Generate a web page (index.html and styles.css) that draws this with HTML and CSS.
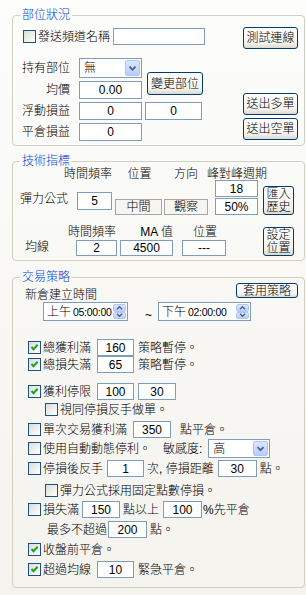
FILE: index.html
```html
<!DOCTYPE html>
<html lang="zh-TW">
<head>
<meta charset="utf-8">
<title>策略設定</title>
<link rel="stylesheet" href="styles.css">
</head>
<body>
<div class="panel">

  <fieldset class="grp grp1">
    <legend>部位狀況</legend>
    <div class="g1">
      <div class="g1-left">
        <div class="row-a">
          <span class="cb cb-a"></span><span class="txt name-lbl">發送頻道名稱</span><span class="tb tb-name"></span>
        </div>
        <div class="g1-grid">
          <span class="glbl">持有部位</span>
          <div class="combo combo-pos"><span class="combo-val">無</span><span class="combo-btn"><svg viewBox="0 0 15 16" width="15" height="16"><path d="M4 6.5 L7.5 10 L11 6.5" fill="none" stroke="#4d6185" stroke-width="2"/></svg></span></div>
          <button class="btn btn-change">變更部位</button>
          <span class="glbl">均價</span>
          <span class="tb tb-g1">0.00</span>
          <span class="glbl">浮動損益</span>
          <span class="tb tb-g1">0</span>
          <span class="tb tb-g1b">0</span>
          <span class="glbl">平倉損益</span>
          <span class="tb tb-g1">0</span>
        </div>
      </div>
      <div class="g1-right">
        <button class="btn btn-r">測試連線</button>
        <div class="btn-pair">
          <button class="btn btn-r">送出多單</button>
          <button class="btn btn-r">送出空單</button>
        </div>
      </div>
    </div>
  </fieldset>

  <fieldset class="grp grp2">
    <legend>技術指標</legend>
    <div class="g2">
      <div class="g2a">
        <span class="hd hd-a1">時間頻率</span>
        <span class="hd hd-a2">位置</span>
        <span class="hd hd-a3">方向</span>
        <span class="hd hd-a4">峰對峰週期</span>
        <span class="lbl-elastic">彈力公式</span>
        <span class="tb tb-five">5</span>
        <span class="tb tb-peak tb-peak1">18</span>
        <button class="btn btn-two btn-import">匯入<br>歷史</button>
        <span class="ro ro-mid">中間</span>
        <span class="ro ro-watch">觀察</span>
        <span class="tb tb-peak tb-peak2">50%</span>
      </div>
      <div class="g2b">
        <span class="hd hd-b1">時間頻率</span>
        <span class="hd hd-b2">MA 值</span>
        <span class="hd hd-b3">位置</span>
        <span class="lbl-ma">均線</span>
        <span class="tb tb-b1">2</span>
        <span class="tb tb-b2">4500</span>
        <span class="tb tb-b3">---</span>
        <button class="btn btn-two btn-setpos">設定<br>位置</button>
      </div>
    </div>
  </fieldset>

  <fieldset class="grp grp3">
    <legend>交易策略</legend>
    <div class="g3">
      <div class="g3-top">
        <span class="txt new-time">新倉建立時間</span>
        <button class="btn btn-apply">套用策略</button>
      </div>
      <div class="time-row">
        <div class="dtp dtp1"><span class="dtp-val"><span class="dtp-ap">上午</span><span class="dtp-num">05:00:00</span></span>
          <span class="spin"><span class="spin-b"><svg viewBox="0 0 13 8" width="13" height="8"><path d="M3.5 5.5 L6.5 2.5 L9.5 5.5" fill="none" stroke="#4d6185" stroke-width="1.6"/></svg></span><span class="spin-b"><svg viewBox="0 0 13 8" width="13" height="8"><path d="M3.5 2.5 L6.5 5.5 L9.5 2.5" fill="none" stroke="#4d6185" stroke-width="1.6"/></svg></span></span>
        </div>
        <span class="tilde">~</span>
        <div class="dtp dtp2"><span class="dtp-val"><span class="dtp-ap">下午</span><span class="dtp-num">02:00:00</span></span>
          <span class="spin"><span class="spin-b"><svg viewBox="0 0 13 8" width="13" height="8"><path d="M3.5 5.5 L6.5 2.5 L9.5 5.5" fill="none" stroke="#4d6185" stroke-width="1.6"/></svg></span><span class="spin-b"><svg viewBox="0 0 13 8" width="13" height="8"><path d="M3.5 2.5 L6.5 5.5 L9.5 2.5" fill="none" stroke="#4d6185" stroke-width="1.6"/></svg></span></span>
        </div>
      </div>

      <div class="rows">
        <div class="r r-first">
          <span class="cb on"><svg viewBox="0 0 11 11" width="11" height="11"><path d="M2.5 5 L4.5 7.2 L8.6 2.8" fill="none" stroke="#21a121" stroke-width="2"/></svg></span><span class="txt">總獲利滿</span><span class="tb w37 ml6">160</span><span class="txt ml4">策略暫停。</span>
        </div>
        <div class="r t0">
          <span class="cb on"><svg viewBox="0 0 11 11" width="11" height="11"><path d="M2.5 5 L4.5 7.2 L8.6 2.8" fill="none" stroke="#21a121" stroke-width="2"/></svg></span><span class="txt">總損失滿</span><span class="tb w37 ml6">65</span><span class="txt ml4">策略暫停。</span>
        </div>
        <div class="r t10">
          <span class="cb on"><svg viewBox="0 0 11 11" width="11" height="11"><path d="M2.5 5 L4.5 7.2 L8.6 2.8" fill="none" stroke="#21a121" stroke-width="2"/></svg></span><span class="txt">獲利停限</span><span class="tb w37 ml6">100</span><span class="tb w38 ml4">30</span>
        </div>
        <div class="r t1 indent">
          <span class="cb"></span><span class="txt">視同停損反手做單。</span>
        </div>
        <div class="r">
          <span class="cb"></span><span class="txt">單次交易獲利滿</span><span class="tb w38 ml6">350</span><span class="txt ml9">點平倉。</span>
        </div>
        <div class="r t2">
          <span class="cb"></span><span class="txt">使用自動動態停利。</span><span class="txt ml12">敏感度:</span>
          <div class="combo combo-sens"><span class="combo-val">高</span><span class="combo-btn"><svg viewBox="0 0 15 15" width="15" height="15"><path d="M4 6 L7.5 9.5 L11 6" fill="none" stroke="#4d6185" stroke-width="2"/></svg></span></div>
        </div>
        <div class="r">
          <span class="cb"></span><span class="txt">停損後反手</span><span class="tb w37 ml4">1</span><span class="txt ml3">次, 停損距離</span><span class="tb w39 ml4">30</span><span class="txt ml3">點。</span>
        </div>
        <div class="r t5 indent">
          <span class="cb"></span><span class="txt">彈力公式採用固定點數停損。</span>
        </div>
        <div class="r t2">
          <span class="cb"></span><span class="txt">損失滿</span><span class="tb w38 ml3">150</span><span class="txt ml3">點以上</span><span class="tb w39 ml4">100</span><span class="txt ml1">%先平倉</span>
        </div>
        <div class="r sub">
          <span class="txt">最多不超過</span><span class="tb w39 ml1">200</span><span class="txt ml3">點。</span>
        </div>
        <div class="r">
          <span class="cb on"><svg viewBox="0 0 11 11" width="11" height="11"><path d="M2.5 5 L4.5 7.2 L8.6 2.8" fill="none" stroke="#21a121" stroke-width="2"/></svg></span><span class="txt">收盤前平倉。</span>
        </div>
        <div class="r">
          <span class="cb on"><svg viewBox="0 0 11 11" width="11" height="11"><path d="M2.5 5 L4.5 7.2 L8.6 2.8" fill="none" stroke="#21a121" stroke-width="2"/></svg></span><span class="txt">超過均線</span><span class="tb w37 ml6">10</span><span class="txt ml4">緊急平倉。</span>
        </div>
      </div>
    </div>
  </fieldset>

</div>
</body>
</html>
```

FILE: styles.css
```css
* { box-sizing: border-box; }
html, body { margin: 0; padding: 0; }
body {
  width: 306px;
  height: 595px;
  overflow: hidden;
  background: linear-gradient(#fdfdfc, #f4f3ee);
  font: 300 12px/14px "Liberation Sans", "Noto Sans CJK TC", sans-serif;
  color: #000;
}
.panel {
  display: flex;
  flex-direction: column;
  padding: 8px 1px 0 12px;
}

/* group boxes */
.grp {
  margin: 0;
  padding: 0;
  min-width: 0;
  border: 1px solid #d0d0bf;
  border-radius: 4px;
}
.grp legend {
  color: #0046d5;
  padding: 0 2px;
  margin-left: 7px;
  line-height: 14px;
}
.grp2 { margin-top: 8px; }
.grp3 { margin-top: 9px; }

.txt { white-space: nowrap; flex: none; }

/* text boxes */
.tb {
  display: flex;
  align-items: center;
  justify-content: center;
  flex: none;
  height: 17px;
  border: 1px solid #7f9db9;
  background: #fff;
  white-space: nowrap;
}
.ro {
  display: flex;
  align-items: center;
  justify-content: center;
  height: 16px;
  border: 1px solid #a7a6a0;
  background: #f5f5f1;
}

/* buttons */
.btn {
  font: inherit;
  color: #000;
  padding: 0;
  margin: 0;
  border: 1px solid #003c74;
  border-radius: 3px;
  background: linear-gradient(#ffffff, #f3f3ef 75%, #dcd8cd);
  line-height: 14px;
  white-space: nowrap;
}
.btn-two { line-height: 13px; }

/* checkbox */
.cb {
  display: flex;
  align-items: center;
  justify-content: center;
  flex: none;
  width: 13px;
  height: 13px;
  border: 1px solid #1c5180;
  background: linear-gradient(135deg, #dcdcd7, #ffffff);
  margin-right: 2px;
}

/* combo box */
.combo {
  display: flex;
  align-items: center;
  border: 1px solid #7f9db9;
  background: #fff;
  padding: 1px;
}
.combo-val { flex: 1; padding-left: 3px; }
.combo-btn {
  display: flex;
  align-items: center;
  justify-content: center;
  width: 15px;
  align-self: stretch;
  border: 1px solid #b1c6f5;
  border-radius: 2px;
  background: linear-gradient(#dbe6ff, #b9cdfb);
}

/* ---------- group 1 ---------- */
.g1 {
  display: flex;
  padding: 5px 6px 4px 9px;
}
.g1-left { flex: 1; }
.row-a {
  display: flex;
  align-items: center;
  height: 17px;
  margin-top: 1px;
}
.cb-a { margin-left: 1px; }
.tb-name { width: 92px; margin-left: 3px; }
.g1-grid {
  display: grid;
  grid-template-columns: 57px 66px 58px;
  grid-template-rows: 20px 18px 18px 18px;
  row-gap: 3px;
  margin-top: 13px;
}
.glbl {
  grid-column: 1;
  align-self: center;
  text-align: right;
  padding-right: 9px;
  white-space: nowrap;
}
.combo-pos { width: 63px; height: 20px; }
.tb-g1 { width: 63px; height: 18px; }
.tb-g1b { width: 57px; height: 18px; }
.btn-change {
  grid-column: 3;
  grid-row: 1 / 3;
  justify-self: end;
  align-self: end;
  width: 56px;
  height: 23px;
  margin-bottom: 4px;
}
.g1-right {
  width: 55px;
  display: flex;
  flex-direction: column;
  justify-content: space-between;
}
.btn-r { width: 55px; height: 22px; }
.btn-pair {
  display: flex;
  flex-direction: column;
  gap: 3px;
  margin-bottom: 1px;
}

/* ---------- group 2 ---------- */
.g2 { padding: 0 0 4px 7px; }
.hd { white-space: nowrap; }
.g2a {
  display: grid;
  grid-template-columns: 56px 36px 51px 46px 51px 35px;
  grid-template-rows: 12px 17px 18px;
}
.hd-a1 { grid-area: 1 / 2; justify-self: end; line-height: 12px; }
.hd-a2 { grid-area: 1 / 3; justify-self: center; margin-left: 4px; line-height: 12px; }
.hd-a3 { grid-area: 1 / 4; justify-self: center; line-height: 12px; }
.hd-a4 { grid-area: 1 / 5; justify-self: start; margin-left: -2px; line-height: 12px; }
.lbl-elastic {
  grid-row: 2 / 4;
  grid-column: 1;
  align-self: center;
  white-space: nowrap;
  padding-top: 2px;
}
.tb-five {
  grid-row: 2 / 4;
  grid-column: 2;
  align-self: end;
  justify-self: end;
  width: 35px;
  height: 18px;
  margin-bottom: 5px;
}
.tb-peak {
  grid-column: 5;
  justify-self: start;
  margin-left: 6px;
  width: 43px;
  height: 17px;
}
.tb-peak1 { grid-row: 2; }
.tb-peak2 { grid-row: 3; align-self: end; }
.btn-import {
  grid-row: 2 / 4;
  grid-column: 6;
  align-self: end;
  justify-self: start;
  margin-left: 3px;
  width: 31px;
  height: 29px;
}
.ro-mid {
  grid-area: 3 / 3;
  align-self: end;
  justify-self: start;
  margin-left: 3px;
  width: 47px;
}
.ro-watch {
  grid-area: 3 / 4;
  align-self: end;
  justify-self: start;
  margin-left: 1px;
  width: 44px;
}

.g2b {
  display: grid;
  grid-template-columns: 56px 42px 55px 53px 37px 31px;
  grid-template-rows: 12px 18px;
  margin-top: 11px;
}
.hd-b1 { grid-area: 1 / 2; justify-self: end; margin-right: 2px; line-height: 12px; }
.hd-b2 { grid-area: 1 / 3; justify-self: end; line-height: 12px; }
.hd-b3 { grid-area: 1 / 4; justify-self: start; margin-left: 20px; line-height: 12px; }
.lbl-ma {
  grid-area: 2 / 1;
  align-self: center;
  padding-left: 5px;
  white-space: nowrap;
}
.tb-b1 { grid-area: 2 / 2; align-self: end; justify-self: start; width: 41px; height: 16px; }
.tb-b2 { grid-area: 2 / 3; align-self: end; justify-self: end; width: 53px; height: 16px; }
.tb-b3 { grid-area: 2 / 4; align-self: end; justify-self: end; width: 44px; height: 16px; }
.btn-setpos {
  grid-row: 1 / 3;
  grid-column: 6;
  align-self: end;
  width: 31px;
  height: 29px;
}

/* ---------- group 3 ---------- */
.g3 { padding: 0 6px 9px 15px; }
.g3-top {
  display: flex;
  align-items: flex-start;
}
.new-time { margin-left: -3px; margin-top: 4px; }
.btn-apply {
  margin-left: auto;
  margin-top: -1px;
  width: 62px;
  height: 15px;
  line-height: 12px;
}
.time-row {
  display: flex;
  align-items: center;
  height: 19px;
  margin-left: 15px;
}
.dtp {
  display: flex;
  align-items: center;
  height: 19px;
  border: 1px solid #7f9db9;
  background: #fff;
  padding: 1px 0 1px 1px;
}
.dtp1 { width: 85px; }
.dtp2 { width: 93px; }
.dtp-val { flex: 1; padding-left: 2px; white-space: nowrap; }
.dtp-ap { margin-right: 2px; }
.dtp-num { font-size: 10.5px; letter-spacing: -0.3px; }
.spin {
  display: flex;
  flex-direction: column;
  align-self: stretch;
  flex: none;
  width: 13px;
  margin-right: 1px;
}
.spin-b {
  flex: 1;
  display: flex;
  align-items: center;
  justify-content: center;
  overflow: hidden;
  border: 1px solid #b1c6f5;
  border-radius: 2px;
  background: linear-gradient(#dbe6ff, #b9cdfb);
}
.tilde { margin-left: 17px; margin-right: 6px; padding-top: 6px; }

.rows { display: flex; flex-direction: column; }
.r {
  display: flex;
  align-items: center;
  height: 17px;
  margin-top: 3px;
}
.r-first { margin-top: 18px; }
.t0 { margin-top: 0; }
.t1 { margin-top: 1px; }
.t2 { margin-top: 2px; }
.t5 { margin-top: 5px; }
.t10 { margin-top: 10px; }
.indent { padding-left: 17px; }
.sub { padding-left: 19px; }
.combo-sens { width: 62px; height: 19px; margin-left: 6px; }

.w37 { width: 37px; }
.w38 { width: 38px; }
.w39 { width: 39px; }
.ml1 { margin-left: 1px; }
.ml3 { margin-left: 3px; }
.ml4 { margin-left: 4px; }
.ml6 { margin-left: 6px; }
.ml9 { margin-left: 9px; }
.ml12 { margin-left: 12px; }
```
